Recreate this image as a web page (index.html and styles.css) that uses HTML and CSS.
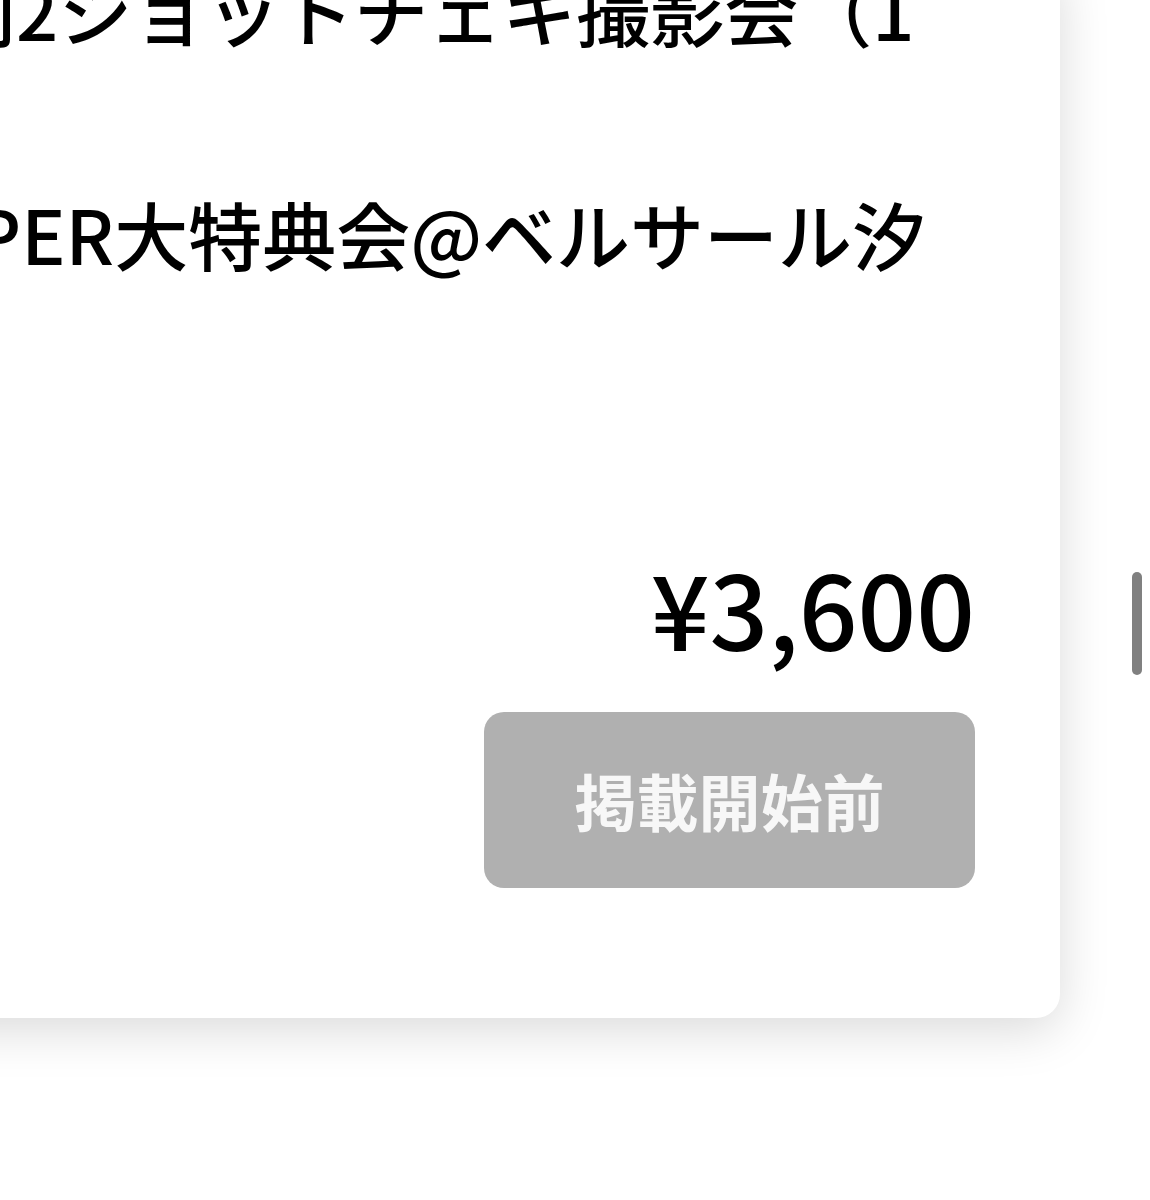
FILE: index.html
```html
<!DOCTYPE html>
<html lang="ja">
<head>
    <meta charset="UTF-8">
    <meta name="viewport" content="width=device-width, initial-scale=1.0">
    <title>個別2ショットチェキ撮影会</title>
    <link rel="stylesheet" href="styles.css">
</head>
<body>
    <div class="page">
        <div class="ticket-card">
            <p class="ticket-title first">個別2ショットチェキ撮影会（1</p>
            <p class="ticket-title second">SUPER大特典会@ベルサール汐</p>
            <div class="ticket-price">¥3,600</div>
            <button class="ticket-button" type="button" disabled>掲載開始前</button>
        </div>
    </div>
    <div class="scroll-thumb"></div>
</body>
</html>
```

FILE: styles.css
```css
body {
    margin: 0;
    background-color: #fff;
    font-family: "Noto Sans CJK JP", "Noto Sans", sans-serif;
    color: #000;
    overflow: hidden;
}
.page {
    padding: 0 90px 200px 0;
}
.ticket-card {
    display: flex;
    flex-direction: column;
    margin: -41px 0 0 -232px;
    padding: 0 85px 130px 100px;
    background-color: #fff;
    border-radius: 24px;
    box-shadow: 0 12px 50px rgba(0, 0, 0, 0.15);
}
.ticket-title {
    margin: 0;
    font-size: 74px;
    line-height: 100px;
    font-weight: 500;
    white-space: nowrap;
}
.ticket-title.second {
    margin-top: 124px;
    margin-left: 6px;
}
.ticket-price {
    margin-top: 272px;
    font-size: 103px;
    line-height: 103px;
    font-weight: 500;
    text-align: right;
}
.ticket-button {
    align-self: flex-end;
    margin-top: 54px;
    width: 491px;
    height: 176px;
    border: none;
    border-radius: 20px;
    background-color: #b0b0b0;
    color: #f7f7f7;
    font-family: inherit;
    font-size: 62px;
    font-weight: 700;
}
.scroll-thumb {
    position: fixed;
    top: 572px;
    right: 8px;
    width: 10px;
    height: 103px;
    border-radius: 5px;
    background-color: #808080;
}
```
